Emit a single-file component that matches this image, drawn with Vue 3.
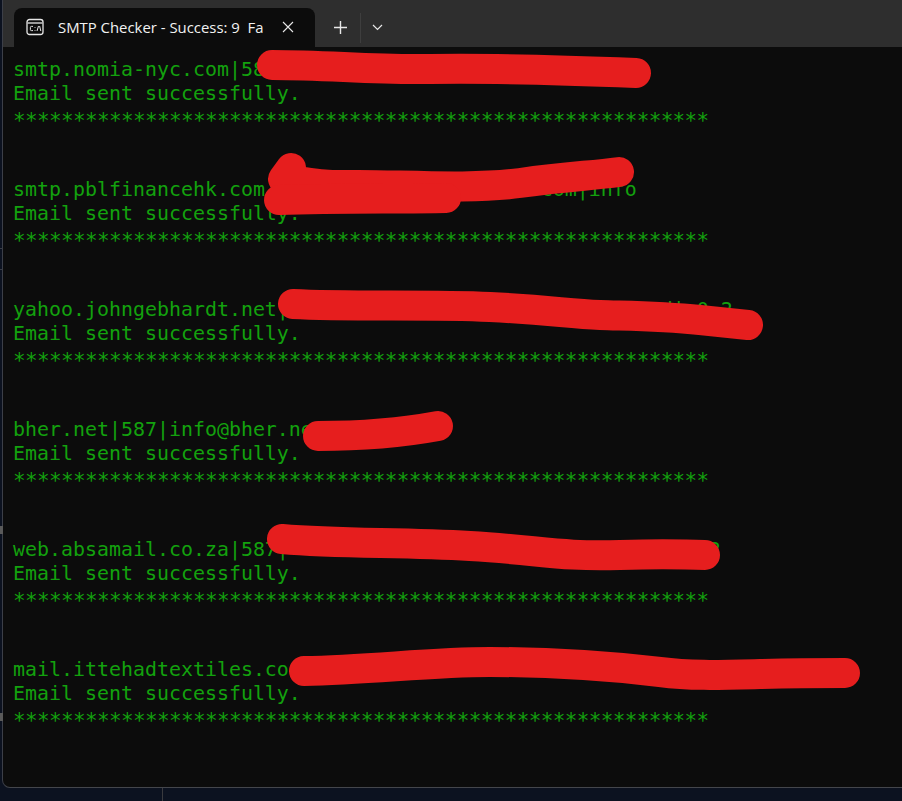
<script setup>
const gap = (n) => ' '.repeat(n)
const entries = [
  'smtp.nomia-nyc.com|58',
  'smtp.pblfinancehk.com' + gap(23) + 'com|info',
  'yahoo.johngebhardt.net|' + gap(25) + "'" + gap(5) + 'd|m0.2',
  "bher.net|587|info@bher.net'",
  'web.absamail.co.za|587|' + gap(35) + '2',
  'mail.ittehadtextiles.co' + gap(35) + "'",
]
const stars = '*'.repeat(58)
const strokes = [
  'M272 65C330 65 370 70 430 69S560 70 636 73',
  'M291 168L283 179C300 180 310 186 350 185S470 190 520 183S590 176 619 172',
  'M279 200C340 198 400 199 446 198',
  'M293 304C350 307 430 304 490 307S570 314 600 315S660 316 700 320L748 325',
  'M318 436C360 436 400 433 438 426',
  'M282 539C340 544 400 542 470 546S560 557 620 555S680 555 705 555',
  'M304 671C370 670 430 662 490 662S600 665 660 672C690 676 720 675 760 674S820 673 845 673',
]
</script>

<template>
  <div class="screen">
    <div class="window">
      <header class="titlebar">
        <div class="tab">
          <svg class="tab-icon" width="18" height="18" viewBox="0 0 18 18" fill="none">
            <rect x="1" y="1.5" width="16" height="15" rx="2.5" stroke="#e6e6e6" stroke-width="1.3" />
            <path d="M1.5 5h15" stroke="#e6e6e6" stroke-width="1.3" />
            <path d="M7 8.4H5.4a1 1 0 0 0-1 1v2.2a1 1 0 0 0 1 1H7M9 9.2v.8M9 12v.8M11 13l1.5-5M13.6 8l1.2 5" stroke="#e6e6e6" stroke-width="1" />
          </svg>
          <span class="tab-title">SMTP Checker - Success: 9&nbsp; Fa</span>
          <svg class="tab-close" width="12" height="12" viewBox="0 0 12 12" fill="none">
            <path d="M1 1l10 10M11 1L1 11" stroke="#e8e8e8" stroke-width="1.1" />
          </svg>
        </div>
        <button class="action plus" aria-label="New tab">
          <svg width="13" height="13" viewBox="0 0 13 13" fill="none">
            <path d="M6.5 0v13M0 6.5h13" stroke="#e8e8e8" stroke-width="1.4" />
          </svg>
        </button>
        <span class="divider"></span>
        <button class="action chevron" aria-label="Open menu">
          <svg width="11" height="7" viewBox="0 0 11 7" fill="none">
            <path d="M1 1l4.5 4.5L10 1" stroke="#e8e8e8" stroke-width="1.2" />
          </svg>
        </button>
      </header>
      <main class="terminal">
        <section v-for="entry in entries" :key="entry" class="entry">
          <div class="line">{{ entry }}</div>
          <div class="line">Email sent successfully.</div>
          <div class="line stars">{{ stars }}</div>
        </section>
        <svg class="scribbles" width="902" height="801" viewBox="0 0 902 801" fill="none">
          <path v-for="d in strokes" :key="d" :d="d" stroke="#e61e1e" stroke-width="30" stroke-linecap="round" stroke-linejoin="round" />
        </svg>
      </main>
    </div>
    <div class="footer-strip"><span class="footer-rule"></span></div>
    <span class="edge-mark mark-a"></span>
    <span class="edge-mark mark-b"></span>
    <span class="edge-tick tick-a"></span>
    <span class="edge-tick tick-b"></span>
  </div>
</template>

<style>
html, body { margin: 0; background: #0c1220; }
</style>

<style scoped>
.screen {
  width: 902px;
  height: 801px;
  overflow: hidden;
  position: relative;
  background: #0c1220;
  display: flex;
  flex-direction: column;
}
.window {
  margin-left: 2px;
  height: 788px;
  box-sizing: border-box;
  border-left: 1px solid #3c3f48;
  border-bottom: 1px solid #44464c;
  border-bottom-left-radius: 8px;
  background: #0c0c0c;
  display: flex;
  flex-direction: column;
  overflow: hidden;
  flex: none;
}
.titlebar {
  height: 47px;
  flex: none;
  background: #2e2e2e;
  display: flex;
  align-items: flex-end;
  padding-left: 11px;
}
.tab {
  width: 301px;
  height: 39px;
  box-sizing: border-box;
  background: #0c0c0c;
  border-radius: 8px 8px 0 0;
  display: flex;
  align-items: center;
  padding: 0 0 2px 12px;
  color: #f2f2f2;
  font: 500 14.9px "Open Sans", "Noto Sans", sans-serif;
}
.tab-icon { flex: none; }
.tab-title {
  margin-left: 14px;
  width: 205px;
  white-space: nowrap;
  overflow: hidden;
}
.tab-close { margin-left: 19px; flex: none; }
.action {
  border: 0;
  background: none;
  padding: 0;
  height: 39px;
  display: flex;
  align-items: center;
  justify-content: center;
}
.plus { width: 40px; margin-left: 5px; }
.divider {
  width: 1px;
  height: 30px;
  margin-bottom: 4px;
  background: #3e3e3e;
}
.chevron { width: 33px; }
.terminal {
  flex: 1;
  padding: 11px 0 0 10px;
  color: #13a10e;
  font: 19.93px/24px "DejaVu Sans Mono", "Liberation Mono", monospace;
}
.entry { height: 120px; }
.line {
  white-space: pre;
  height: 24px;
}
.stars {
  font-size: 21px;
  letter-spacing: -0.65px;
  line-height: 31px;
}
.scribbles {
  position: absolute;
  left: 0;
  top: 0;
  pointer-events: none;
}
.footer-strip {
  flex: 1;
  padding-left: 162px;
}
.footer-rule {
  display: block;
  width: 1px;
  height: 100%;
  background: #3a3a3e;
}
.edge-mark {
  position: absolute;
  left: 0;
  width: 3px;
  height: 8px;
  background: #5a5a5a;
}
.mark-a { top: 526px; }
.mark-b { top: 713px; }
.edge-tick {
  position: absolute;
  left: 0;
  width: 3px;
  height: 1px;
  background: #3a3d45;
}
.tick-a { top: 248px; }
.tick-b { top: 269px; }
</style>
